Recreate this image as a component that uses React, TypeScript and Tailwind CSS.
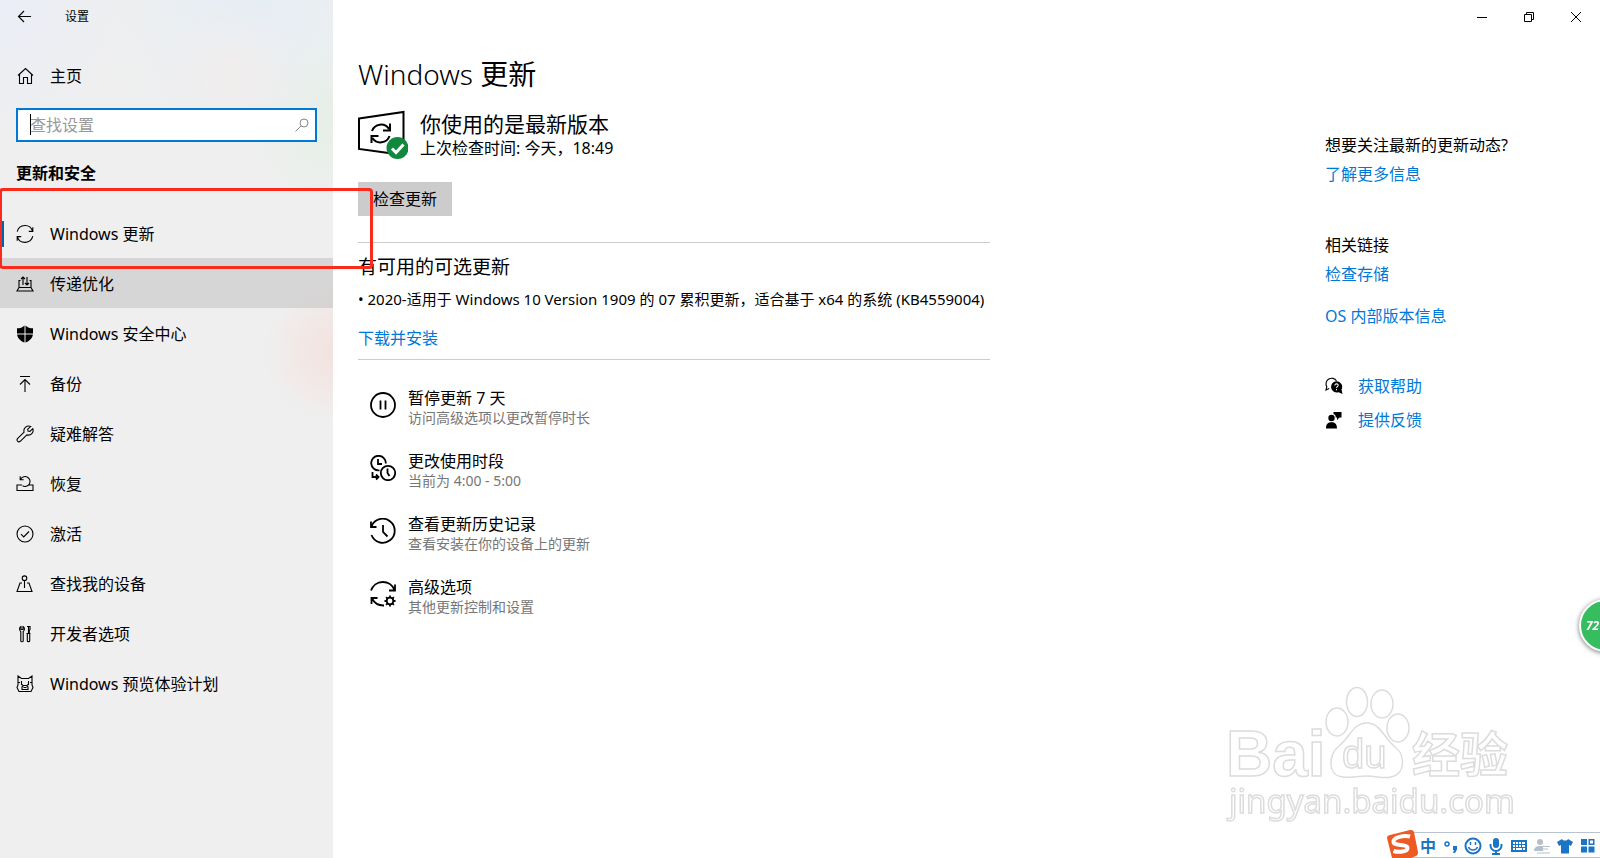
import type { ReactNode } from "react";

type IconProps = { children: ReactNode; size?: string; box?: number; width?: number };

function Icon({ children, size = "size-[18px]", box = 18, width = 1.1 }: IconProps) {
  return (
    <svg
      viewBox={`0 0 ${box} ${box}`}
      className={`${size} shrink-0`}
      fill="none"
      stroke="currentColor"
      strokeWidth={width}
      aria-hidden="true"
    >
      {children}
    </svg>
  );
}

const NAV: { label: string; icon: ReactNode; state?: "active" | "hover" }[] = [
  {
    label: "Windows 更新",
    state: "active",
    icon: (
      <Icon>
        <path d="M1.2 6.6A8 8 0 0 1 16.6 6.2M16.8 2.2v4.2h-4M16.8 11.2A8 8 0 0 1 1.4 11.8M1.2 15.8v-4.2h4" />
      </Icon>
    ),
  },
  {
    label: "传递优化",
    state: "hover",
    icon: (
      <Icon>
        <path d="M4.500 5.500H3v7h12v-7h-1.500M3 12.500L1 16h16l-2-3.500M7 10V2M5 4l2-2 2 2M11 2v8M9 8l2 2 2-2" />
      </Icon>
    ),
  },
  {
    label: "Windows 安全中心",
    icon: (
      <Icon>
        <path
          stroke="none"
          fill="currentColor"
          d="M8.500 .5v8H1V3.300C4 3.300 6.500 2.500 8.500 .5zM9.500 .5c2 2 4.500 2.800 7.500 2.800v5.200H9.500zM1.100 9.500h7.400v8C4.500 16 1.500 13.300 1.100 9.500zM9.500 9.500h7.400c-.4 3.800-3.400 6.500-7.400 8z"
        />
      </Icon>
    ),
  },
  {
    label: "备份",
    icon: (
      <Icon>
        <path d="M4 1.500h10M9 17V5M4 9.500L9 4.500l5 5" />
      </Icon>
    ),
  },
  {
    label: "疑难解答",
    icon: (
      <Icon>
        <path d="M14.800 1.500a4.800 4.800 0 0 0-6.700 5.700L1.500 13.600a2 2 0 0 0 0 2.500 2 2 0 0 0 2.700.2l6.700-6.400a4.800 4.800 0 0 0 5.900-6.300l-2.900 2.800-1.900-.3-.3-1.900z" />
      </Icon>
    ),
  },
  {
    label: "恢复",
    icon: (
      <Icon>
        <path d="M6 10H1v5.500h16V10h-4.500M4.700 4A5 5 0 1 1 6.500 10.800M4.200 1.200v3.500h3.500" />
      </Icon>
    ),
  },
  {
    label: "激活",
    icon: (
      <Icon>
        <circle cx="9" cy="9" r="8" />
        <path d="M5 9.200l2.700 2.700L13 6.500" />
      </Icon>
    ),
  },
  {
    label: "查找我的设备",
    icon: (
      <Icon>
        <circle cx="8.500" cy="3.200" r="2.300" />
        <path d="M8.500 5.500v7.500M6 8H4l-3 8.500h15L13 8h-2" />
      </Icon>
    ),
  },
  {
    label: "开发者选项",
    icon: (
      <Icon>
        <path d="M5 1.500v3h2v-3c1.800.8 2 3.800.2 5V16c0 1-2.400 1-2.400 0V6.500C3 5.300 3.200 2.300 5 1.500zM12.500 8V1.500M11 1.500h3v3l-.7 1V8M10.500 8.500h4M11.300 9v7c0 1 2.400 1 2.400 0V9" />
      </Icon>
    ),
  },
  {
    label: "Windows 预览体验计划",
    icon: (
      <Icon>
        <path d="M2 1l3.500 2.500h7L16 1v9l1 2.500-2 4H3l-2-4L2 10zM1.500 7.500H4M14 7.500h2.500M5.500 6v3.500l1.500.5M12.500 6v3.500L11 10M6 12l1.500-1.500h3L12 12v2.500H6zM7.500 12.500h3" />
      </Icon>
    ),
  },
];

const OPTIONS: { title: string; note: string; icon: ReactNode }[] = [
  {
    title: "暂停更新 7 天",
    note: "访问高级选项以更改暂停时长",
    icon: (
      <>
        <circle cx="13" cy="13" r="12" />
        <path d="M10.500 8.500v9M15.500 8.500v9" />
      </>
    ),
  },
  {
    title: "更改使用时段",
    note: "当前为 4:00 - 5:00",
    icon: (
      <>
        <path d="M9.500 15.300A7.300 7.300 0 1 1 15.800 8.500M8 4v5h4M2.500 17v5h6M6 19.500L8.500 22 6 24.500" />
        <circle cx="18" cy="18" r="7.200" />
        <path d="M17.500 13.500V18l2 3" />
      </>
    ),
  },
  {
    title: "查看更新历史记录",
    note: "查看安装在你的设备上的更新",
    icon: <path d="M1 3.500v5.500h5.500M1.500 8.500A12 12 0 1 1 1.500 17M13 7v7l4.500 4.500" />,
  },
  {
    title: "高级选项",
    note: "其他更新控制和设置",
    icon: (
      <>
        <path d="M1 9.500A12.500 12.500 0 0 1 24.500 9M25 3.500V9.500h-6M1.500 23v-6h6M2 17.500A13 13 0 0 0 14 24.500" />
        <circle cx="20" cy="20" r="3.300" />
        <path d="M20 14.500v2M20 23.500v2M14.500 20h2M23.500 20h2M16.100 16.100l1.500 1.500M22.400 22.400l1.500 1.500M16.100 23.900l1.500-1.500M22.400 17.600l1.500-1.500" />
      </>
    ),
  },
];

const LINK = "text-[#0078d7] hover:text-gray-500";

function Sidebar() {
  return (
    <aside className="w-[333px] shrink-0 bg-[#efefef] bg-[radial-gradient(circle_at_100%_41%,#f3e2de_0px,transparent_70px),radial-gradient(circle_at_100%_14%,#e6efe7_0px,transparent_90px),radial-gradient(circle_at_70%_9%,#f1eded_0px,transparent_80px),radial-gradient(circle_at_75%_0%,#e5edf5_0px,transparent_150px),radial-gradient(circle_at_0%_0%,#eaedf6_0px,transparent_140px)]">
      <div className="flex h-[34px] items-center gap-[31px] pl-4">
        <button aria-label="返回">
          <Icon>
            <path d="M15 8.500H2.500M8 3L2.500 8.500 8 14" />
          </Icon>
        </button>
        <span className="text-xs">设置</span>
      </div>
      <a href="#home" className="mt-[22px] flex h-10 items-center gap-4 pl-4">
        <Icon>
          <path d="M2 8.500l7.500-7 7.500 7M3.500 7.500v9h4v-6h4v6h4v-9" />
        </Icon>
        主页
      </a>
      <div className="relative mx-4 mt-3">
        <input
          type="search"
          aria-label="查找设置"
          placeholder="查找设置"
          className="block h-[34px] w-full border-2 border-[#0078d7] bg-white pr-9 pl-3 outline-none placeholder:text-[#999]"
        />
        <span className="absolute top-[6px] left-[14px] h-[21px] w-px bg-black" />
        <span className="absolute top-[10px] right-2 text-[#888]">
          <Icon size="size-[14px]" box={14} width={1}>
            <circle cx="9" cy="5" r="4" />
            <path d="M6 8l-5.500 5.500" />
          </Icon>
        </span>
      </div>
      <h2 className="mt-[11px] h-10 pl-4 leading-10 font-bold">更新和安全</h2>
      <nav className="mt-[15px]">
        {NAV.map((n) => (
          <a
            key={n.label}
            href="#nav"
            className={`relative flex h-[50px] items-center gap-4 pt-0.5 pl-4 ${n.state === "hover" ? "bg-black/10" : ""}`}
          >
            {n.state === "active" && <span className="absolute left-0 h-[26px] w-1 bg-[#0063b1]" />}
            {n.icon}
            {n.label}
          </a>
        ))}
      </nav>
    </aside>
  );
}

function WindowControls() {
  return (
    <div className="flex h-[34px] justify-end pr-px">
      <button aria-label="最小化" className="grid w-[47px] place-items-center">
        <Icon size="size-3" box={12} width={1}>
          <path d="M1 6.500h10" />
        </Icon>
      </button>
      <button aria-label="还原" className="grid w-[47px] place-items-center">
        <Icon size="size-3" box={12} width={1}>
          <path d="M1.500 3.500h7v7h-7zM3.500 3.500v-2h7v7h-2" />
        </Icon>
      </button>
      <button aria-label="关闭" className="grid w-[47px] place-items-center">
        <Icon size="size-3" box={12} width={1}>
          <path d="M1 1l10 10M11 1L1 11" />
        </Icon>
      </button>
    </div>
  );
}

function UpdatePanel() {
  return (
    <main className="w-[632px]">
      <h1 className="mt-5 text-[28px] leading-10 font-light">
        Windows <span className="font-normal">更新</span>
      </h1>
      <div className="mt-4 flex gap-3">
        <svg viewBox="0 0 50 50" className="size-[50px] shrink-0" fill="none" stroke="black" strokeWidth="2" aria-hidden="true">
          <path d="M1 8.500L45.500 2v43L1 39z" />
          <path d="M14 21a9.500 9.500 0 0 1 17-2M32 13.500v7h-7M31.500 26a9.500 9.500 0 0 1-17 2M13.500 33v-7h7" />
          <circle cx="39.500" cy="38" r="11" fill="#10893e" stroke="none" />
          <path d="M34 38.500l4 4 7.500-8" stroke="white" strokeWidth="3" />
        </svg>
        <div>
          <p className="text-[21px] leading-7">你使用的是最新版本</p>
          <p className="leading-5">上次检查时间: 今天，18:49</p>
        </div>
      </div>
      <button className="mt-[22px] h-[34px] bg-[#ccc] px-[15px]">检查更新</button>

      <section className="mt-[26px] border-y border-[#ccc] pt-[10px] pb-[11px]">
        <h2 className="text-[19px] leading-7">有可用的可选更新</h2>
        <p className="mt-2 text-[15px] leading-5 whitespace-nowrap">
          • 2020-适用于 Windows 10 Version 1909 的 07 累积更新，适合基于 x64 的系统 (KB4559004)
        </p>
        <a href="#install" className={`mt-[19px] block leading-5 ${LINK}`}>
          下载并安装
        </a>
      </section>

      <ul className="flex flex-col gap-6 pt-7 pl-3">
        {OPTIONS.map((o) => (
          <li key={o.title}>
            <a href="#option" className="flex gap-3">
              <span className="mt-1">
                <Icon size="size-[26px]" box={26} width={1.8}>
                  {o.icon}
                </Icon>
              </span>
              <span>
                <span className="block leading-5">{o.title}</span>
                <span className="block text-sm leading-[19px] text-[#767676]">{o.note}</span>
              </span>
            </a>
          </li>
        ))}
      </ul>
    </main>
  );
}

function RelatedLinks() {
  return (
    <aside className="w-[275px] shrink-0 pt-[101px] leading-5">
      <h3>想要关注最新的更新动态?</h3>
      <a href="#more" className={`mt-[9px] block ${LINK}`}>
        了解更多信息
      </a>
      <h3 className="mt-[51px]">相关链接</h3>
      <a href="#storage" className={`mt-[9px] block ${LINK}`}>
        检查存储
      </a>
      <a href="#build" className={`mt-[22px] block ${LINK}`}>
        OS 内部版本信息
      </a>
      <a href="#help" className={`mt-[50px] flex items-center gap-[15px] ${LINK}`}>
        <span className="text-black">
          <Icon>
            <path d="M4.200 11.500L1 13l.8-3.300A5.600 5.600 0 1 1 11.500 4" />
            <path
              stroke="none"
              fill="currentColor"
              d="M11.500 4.200a5.700 5.700 0 0 1 5 8.400L17.500 17l-3.900-1.700A5.700 5.700 0 1 1 11.500 4.200z"
            />
            <path stroke="white" d="M9.800 8.500c.2-2.500 3.800-2 3.300.2-.3 1-1.500 1-1.600 2.200M11.500 12v1.200" />
          </Icon>
        </span>
        获取帮助
      </a>
      <a href="#feedback" className={`mt-[14px] flex items-center gap-[15px] ${LINK}`}>
        <span className="text-black">
          <Icon>
            <g stroke="none" fill="currentColor">
              <circle cx="6.500" cy="7" r="3.200" />
              <path d="M1 17.500c0-4.500 2-6.300 5.500-6.300s5.500 1.800 5.500 6.300zM8.500 1H16.500v5.500h-2L12 9V6.500h-1.200C10.800 4.500 10 3.500 8.500 3z" />
            </g>
          </Icon>
        </span>
        提供反馈
      </a>
    </aside>
  );
}

function Watermark() {
  return (
    <svg
      viewBox="0 0 300 150"
      className="pointer-events-none fixed right-[80px] bottom-[28px] w-[300px]"
      fill="white"
      stroke="#dcdcdc"
      strokeWidth="1.500"
      aria-hidden="true"
    >
      <text x="6" y="96" fontSize="64" className="font-['Liberation_Sans',sans-serif] font-bold">
        Bai
      </text>
      <ellipse cx="117" cy="42" rx="11" ry="14" />
      <ellipse cx="137" cy="22" rx="10.500" ry="14.500" />
      <ellipse cx="162" cy="24" rx="11" ry="14" />
      <ellipse cx="178" cy="48" rx="11" ry="14" />
      <path d="M147 43c-14 0-17 14-28 23-11 8-12 30 4 31 9 1 14-1 24-1s15 3 24 1c15-3 14-22 5-29-12-10-16-25-29-25z" />
      <text x="122" y="88" fontSize="40" className="font-['Liberation_Sans',sans-serif]">
        du
      </text>
      <text x="192" y="92" fontSize="48" className="font-['Noto_Sans_CJK_SC',sans-serif] font-bold">
        经验
      </text>
      <text x="9" y="133" fontSize="33" className="font-['Noto_Sans',sans-serif]">
        jingyan.baidu.com
      </text>
    </svg>
  );
}

function InputMethodBar() {
  return (
    <div className="fixed right-0 bottom-0 flex items-end">
      <svg viewBox="0 0 32 28" className="z-10 -mr-3 h-7 w-8" aria-hidden="true">
        <path d="M4 5l20-5q3-.3 4 2l4 20q.3 3-2 4l-5 2H6L1 8q0-2.500 3-3z" fill="#ee5a24" />
        <path
          d="M24 6.500C18 5 7 7 7.500 12c.5 4.500 14 1.500 14 6 0 4-9 4.500-14 3"
          fill="none"
          stroke="white"
          strokeWidth="4"
        />
      </svg>
      <div className="flex h-[26px] items-center gap-[5px] border-y border-[#b9c4d0] bg-white pt-px pr-[3px] pl-[14px] text-[#1c74c4]">
        <span className="w-4 text-base leading-6 font-bold">中</span>
        <Icon width={2}>
          <circle cx="6" cy="7" r="2" strokeWidth="1.500" />
          <path stroke="none" fill="currentColor" d="M12 9h4v3.500L14 16h-2l1-3h-1z" />
        </Icon>
        <Icon width={2}>
          <circle cx="9" cy="9" r="7.500" />
          <path d="M6.500 5v3M11.500 5v3M4.500 10c1.500 4 7.500 4 9 0" strokeWidth="1.500" />
        </Icon>
        <Icon width={2}>
          <rect x="6" y="1" width="6" height="10" rx="3" fill="currentColor" stroke="none" />
          <path d="M3.500 7v1.500a5.500 5.500 0 0 0 11 0V7M9 14v3M5 17h8" />
        </Icon>
        <Icon>
          <path
            fill="currentColor"
            fillRule="evenodd"
            stroke="none"
            d="M1 3h16v12H1zM3 5v2h2V5zM6 5v2h2V5zM9 5v2h2V5zM12 5v2h3V5zM3 8v2h2V8zM6 8v2h2V8zM9 8v2h2V8zM12 8v2h3V8zM3 11v2h2v-2zM6 11v2h6v-2zM13 11v2h2v-2z"
          />
        </Icon>
        <span className="text-[#b5bfc9]">
          <Icon>
            <circle cx="7" cy="5" r="3" fill="currentColor" stroke="none" />
            <path fill="currentColor" stroke="none" d="M1 14c0-4 3-5 6-5h3v5z" />
            <path d="M10 9.500h7M10 12h5M4 16h13" />
          </Icon>
        </span>
        <Icon>
          <path stroke="none" fill="currentColor" d="M6 2c1 2 5 2 6 0l5 3-2 4-2-1v8.500H5V8L3 9 1 5z" />
        </Icon>
        <Icon>
          <path
            fill="currentColor"
            fillRule="evenodd"
            stroke="none"
            d="M2 2h6v6H2zM9.500 2h6v6h-6zM11 3.500v3h3v-3zM2 9.500h6v6H2zM9.500 9.500h6v6h-6z"
          />
        </Icon>
      </div>
    </div>
  );
}

export default function App() {
  return (
    <div className="relative flex min-h-screen overflow-hidden bg-white font-['Noto_Sans','Noto_Sans_CJK_SC',sans-serif] text-base text-black">
      <Sidebar />
      <div className="flex-1">
        <WindowControls />
        <div className="flex justify-between pl-[25px]">
          <UpdatePanel />
          <RelatedLinks />
        </div>
      </div>

      {/* marker around the current page entry */}
      <div className="pointer-events-none absolute top-[188px] -left-px h-[81px] w-[374px] rounded border-3 border-[#fa2a1c]" />
      <Watermark />
      <div className="fixed top-[599px] -right-8 flex size-[53px] items-center rounded-full border-2 border-white bg-[#35bd60] pl-[5px] text-xs font-bold text-white italic shadow-[0_1px_5px_#777]">
        72
      </div>
      <InputMethodBar />
    </div>
  );
}
